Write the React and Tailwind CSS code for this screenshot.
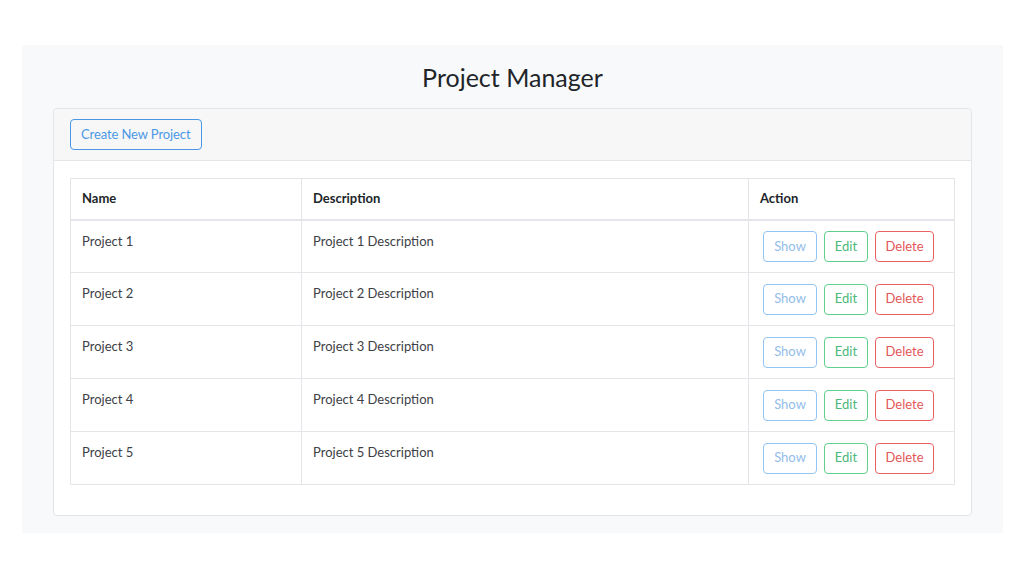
import React from "react";

const projects = [1, 2, 3, 4, 5].map((n) => ({
  id: n,
  name: `Project ${n}`,
  description: `Project ${n} Description`,
}));

function App() {
  return (
    <div
      className="min-h-screen bg-white pt-[45px] px-[22px]"
      style={{ fontFamily: "Lato, 'Noto Sans', sans-serif" }}
    >
      <div className="w-[981px] h-[488px] bg-[#f8f9fb] px-[31px] pt-[17px]">
        <h2 className="text-center text-[25px] leading-[30px] text-[#212529] mb-[16px]">
          Project Manager
        </h2>

        {/* Card */}
        <div className="bg-white border border-[#e3e5e8] rounded-[4px]">
          <div className="h-[52px] bg-[#f7f7f7] border-b border-[#e3e5e8] px-[16px] flex items-center rounded-t-[4px]">
            <button className="h-[31px] px-[10px] border border-[#4a97e6] text-[#4a97e6] text-[13px] tracking-[-0.1px] rounded-[4px]">
              Create New Project
            </button>
          </div>

          <div className="px-[16px] pt-[17px] pb-[30px]">
            <table className="w-full border-collapse text-[13px]">
              <thead>
                <tr className="h-[41px]">
                  <th className="w-[231px] border border-[#e3e5e8] border-b-2 text-left font-bold text-[#212529] px-[11px]">
                    Name
                  </th>
                  <th className="w-[447px] border border-[#e3e5e8] border-b-2 text-left font-bold text-[#212529] px-[11px]">
                    Description
                  </th>
                  <th className="border border-[#e3e5e8] border-b-2 text-left font-bold text-[#212529] px-[11px]">
                    Action
                  </th>
                </tr>
              </thead>
              <tbody>
                {projects.map((p) => (
                  <tr key={p.id} className="h-[53px]">
                    <td className="border border-[#e3e5e8] align-top px-[11px] pt-[11px] text-[#3d4146]">
                      {p.name}
                    </td>
                    <td className="border border-[#e3e5e8] align-top px-[11px] pt-[11px] text-[#3d4146]">
                      {p.description}
                    </td>
                    <td className="border border-[#e3e5e8] px-[14px] align-middle">
                      <div className="flex gap-[7px]">
                        <button className="h-[31px] w-[54px] border border-[#93c4f3] text-[#93bde9] rounded-[4px]">
                          Show
                        </button>
                        <button className="h-[31px] w-[44px] border border-[#5fcf8c] text-[#4cb87a] rounded-[4px]">
                          Edit
                        </button>
                        <button className="h-[31px] w-[59px] border border-[#ea6262] text-[#e35757] rounded-[4px]">
                          Delete
                        </button>
                      </div>
                    </td>
                  </tr>
                ))}
              </tbody>
            </table>
          </div>
        </div>
      </div>
    </div>
  );
}

export default App;
